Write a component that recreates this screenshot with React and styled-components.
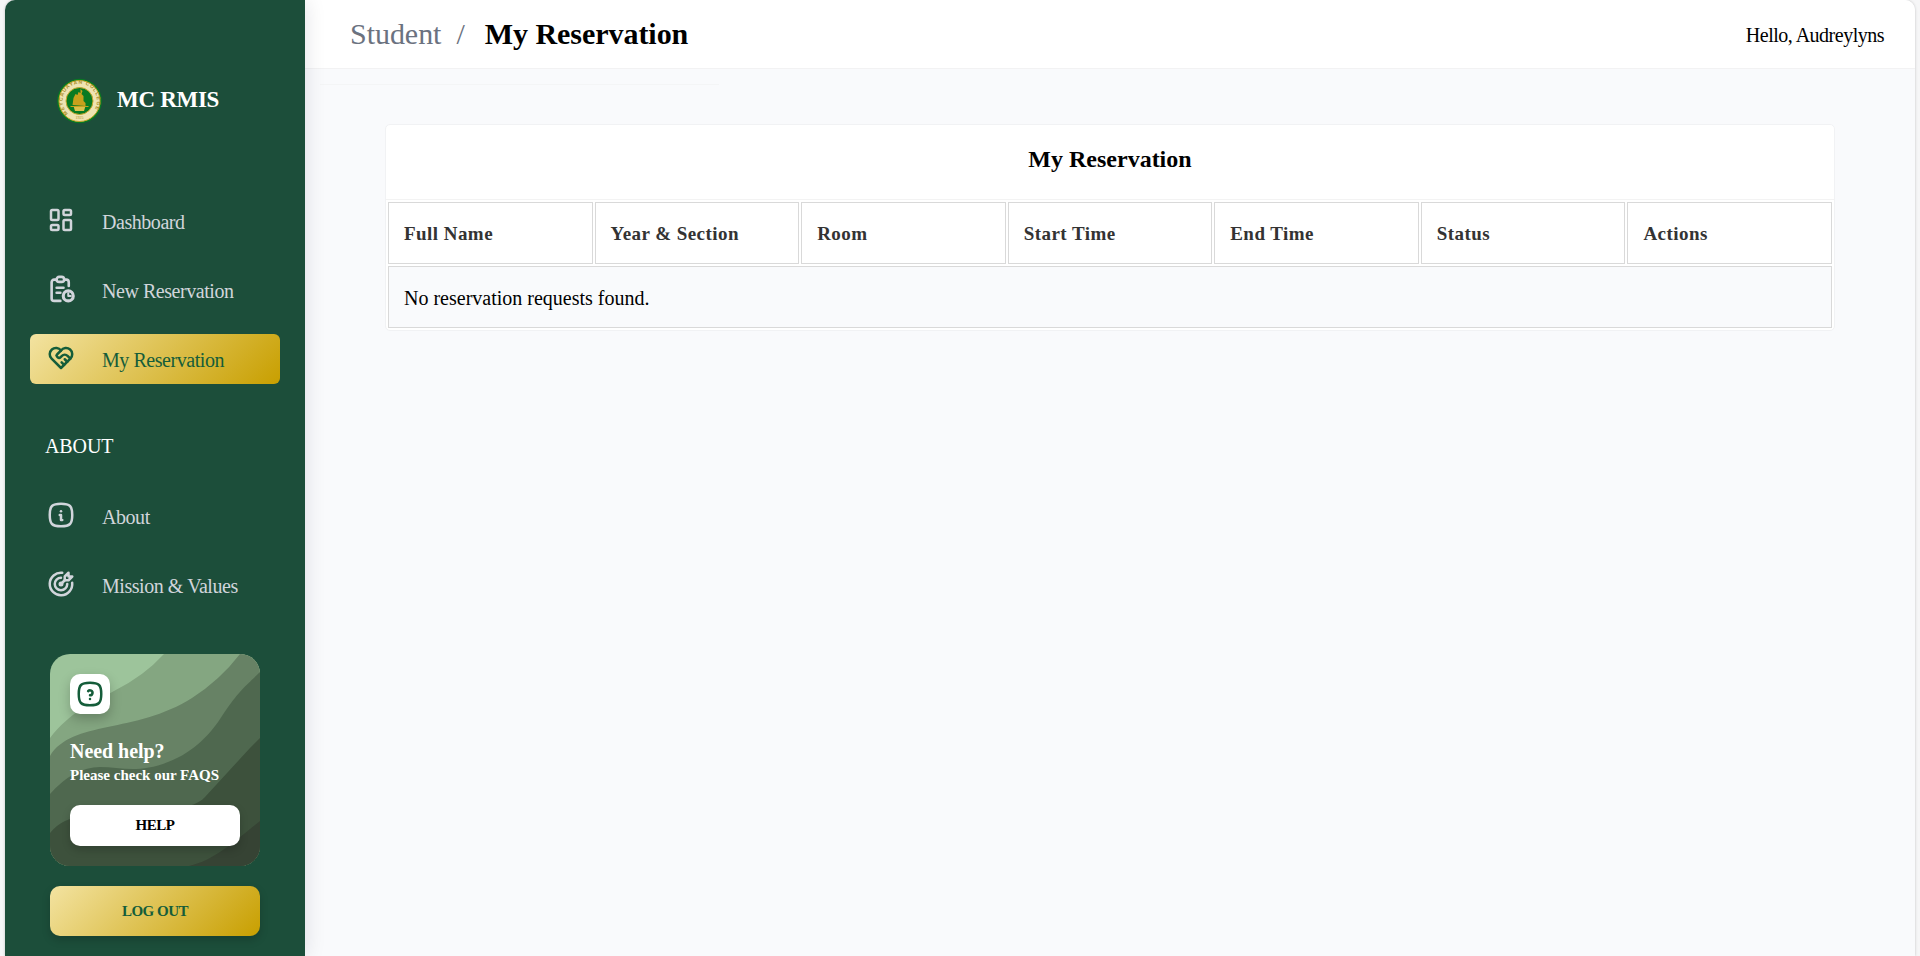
import React from 'react';
import styled, { createGlobalStyle, css } from 'styled-components';
import {
  TbLayoutDashboard,
  TbHeartHandshake,
  TbInfoSquareRounded,
  TbTargetArrow,
  TbHelpSquareRounded,
} from 'react-icons/tb';

const GlobalStyle = createGlobalStyle`
  * { box-sizing: border-box; }
  body {
    margin: 0;
    background: #f6f6f7;
    font-family: "Liberation Serif", serif;
    overflow: hidden;
  }
  h1, h2, h3, p { margin: 0; }
  button { font-family: inherit; border: 0; }
`;

const gold = 'linear-gradient(135deg, #f3e3a1 0%, #c89f00 100%)';

const Shell = styled.div`
  display: flex;
  height: 956px;
  margin: 0 5px;
  background: #f9fafc;
  border-radius: 10px 10px 0 0;
  box-shadow: 0 0 3px rgba(0, 0, 0, 0.22);
  overflow: hidden;
`;

const Sidebar = styled.aside`
  position: relative;
  width: 300px;
  flex: none;
  background: #1c4e3a;
  box-shadow: 0 0 20px rgba(20, 20, 40, 0.12);
`;

const Brand = styled.div`
  display: flex;
  align-items: center;
  gap: 15px;
  height: 50px;
  margin: 76px 0 0 51px;
`;

const BrandName = styled.h1`
  font-size: 23px;
  line-height: 26px;
  letter-spacing: -0.3px;
  color: #fff;
  padding-bottom: 2px;
`;

const Nav = styled.nav`
  display: flex;
  flex-direction: column;
  gap: 19px;
  padding: 0 25px;
  margin-top: ${(p) => p.$top}px;
`;

const NavItem = styled.a`
  display: flex;
  align-items: center;
  gap: 26.5px;
  height: 50px;
  padding-left: 15.5px;
  border-radius: 6px;
  font-size: 20px;
  letter-spacing: -0.45px;
  color: #d1d5db;
  svg { flex: none; margin-bottom: 3px; }
  span { padding-top: 2px; }
  ${(p) =>
    p.$active &&
    css`
      color: #155d3a;
      background: ${gold};
    `}
`;

const SectionTitle = styled.h2`
  margin: 51px 0 0 40px;
  font-size: 20px;
  font-weight: 400;
  line-height: 22px;
  letter-spacing: -0.1px;
  color: #fff;
`;

const HelpCard = styled.div`
  position: relative;
  width: 210px;
  height: 212px;
  margin: 44px 0 0 45px;
  padding: 20px;
  border-radius: 20px;
  overflow: hidden;
  color: #fff;
`;

const Waves = styled.svg`
  position: absolute;
  inset: 0;
`;

const HelpContent = styled.div`
  position: relative;
  display: flex;
  flex-direction: column;
`;

const HelpBadge = styled.div`
  display: grid;
  place-items: center;
  width: 40px;
  height: 40px;
  border-radius: 10px;
  background: #fff;
  color: #155d3a;
  box-shadow: 0 5px 12px rgba(0, 0, 0, 0.22);
`;

const HelpTitle = styled.h3`
  margin-top: 25px;
  font-size: 20px;
  line-height: 24px;
  letter-spacing: -0.05px;
`;

const HelpText = styled.p`
  margin-top: 1px;
  font-size: 15px;
  line-height: 22px;
  font-weight: 700;
`;

const Button = styled.button`
  display: block;
  font-size: 15px;
  font-weight: 700;
  padding: 0;
  border-radius: 10px;
  box-shadow: 0 4px 8px rgba(0, 0, 0, 0.18);
`;

const HelpButton = styled(Button)`
  width: 170px;
  height: 41px;
  margin-top: 19px;
  letter-spacing: -0.4px;
  background: #fff;
  color: #000;
`;

const LogoutButton = styled(Button)`
  width: 210px;
  height: 50px;
  margin: 20px 0 0 45px;
  letter-spacing: -0.5px;
  background: ${gold};
  color: #155d3a;
`;

const Main = styled.main`
  flex: 1;
  min-width: 0;
`;

const Header = styled.header`
  display: flex;
  justify-content: space-between;
  align-items: center;
  height: 69px;
  padding: 0 31px 0 45px;
  background: #fff;
  border-bottom: 1px solid #f2f2f3;
`;

const Breadcrumb = styled.div`
  display: flex;
  align-items: center;
  font-size: 30px;
  line-height: 34px;
  letter-spacing: -0.04px;
  color: #6b7280;
  span { margin-left: 15px; }
  strong { margin-left: 20px; color: #000; }
`;

const Greeting = styled.div`
  font-size: 20px;
  letter-spacing: -0.5px;
  padding-top: 2px;
  color: #000;
`;

const Divider = styled.div`
  width: 399px;
  height: 1px;
  margin: 15px 0 0 15px;
  background: #f4f5f6;
`;

const Card = styled.section`
  width: 1450px;
  margin: 39px 0 0 80px;
  border: 1px solid #f1f2f4;
  border-radius: 5px;
  background: #fff;
`;

const CardTitle = styled.h2`
  height: 75px;
  padding-top: 20px;
  border-bottom: 1px solid #f3f3f3;
  text-align: center;
  font-size: 24px;
  line-height: 29px;
`;

const Table = styled.table`
  width: 100%;
  table-layout: fixed;
  border-collapse: separate;
  border-spacing: 2px;
  text-align: left;
`;

const Th = styled.th`
  height: 62px;
  padding: 1px 15px 0;
  border: 1px solid #d9d9d9;
  font-size: 19px;
  letter-spacing: 0.45px;
  color: #333;
`;

const Td = styled.td`
  height: 62px;
  padding: 2px 15px 0;
  border: 1px solid #d9d9d9;
  background: #f9fafc;
  font-size: 20px;
  color: #000;
`;

function Seal() {
  return (
    <svg width="46" height="46" viewBox="-0.5 1 46 46">
      <defs>
        <path id="ring-text" d="M11.500 36.500 A17.200 17.200 0 1 1 35.500 36" />
      </defs>
      <circle cx="23" cy="24" r="22.300" fill="#087a22" />
      <circle cx="23" cy="24" r="20.500" fill="#efe3b2" stroke="#c9a92b" />
      <circle cx="23" cy="24" r="13.500" fill="#087a22" stroke="#c9a92b" />
      <text fontSize="5" fontWeight="700" fontFamily="Liberation Sans, sans-serif" fill="#a98c1e">
        <textPath href="#ring-text" textLength="76">MEYCAUAYAN COLLEGE</textPath>
      </text>
      <text x="23" y="42.300" fontSize="4" textAnchor="middle" fill="#a98c1e">1925</text>
      <path d="M16 28l1-7 2-4 2 1 1-3 2 1V12l2 2-1 3 2 2v5l2 2v3z" fill="#c6a11c" />
      <path d="M17 29h12l-1.500 5H18.500z" fill="#d9c14c" />
      <path d="M14 29.500h18" stroke="#c6a11c" />
    </svg>
  );
}

function ClipboardClock() {
  return (
    <svg width="30" height="30" viewBox="0 0 24 24" fill="none" stroke="currentColor" strokeWidth="2.100" strokeLinecap="round" strokeLinejoin="round">
      <path d="M8 4.500H6.500a2 2 0 0 0-2 2v13a2 2 0 0 0 2 2h5M15.500 4.500h.7a2 2 0 0 1 2 2V9.500" />
      <rect x="8.500" y="2.300" width="6" height="4" rx="2" />
      <path d="M8.500 11h5.500M8.500 15h3" />
      <circle cx="17.800" cy="17.500" r="4" strokeWidth="2.500" />
      <path d="M17.800 15.300v2.300h2" strokeWidth="1.600" />
    </svg>
  );
}

function HelpWaves() {
  return (
    <Waves width="210" height="212" viewBox="0 0 210 212">
      <rect width="210" height="212" fill="#9dc49b" />
      <path d="M0 84C20 58 42 49 64 37Q94 22 114 0H210V212H0Z" fill="#84a681" />
      <path d="M0 102C22 66 85 80 142 44Q170 26 190 0H210V212H0Z" fill="#678265" />
      <path d="M0 140Q24 113 50 113C70 113 88 120 118 108C145 98 162 78 172 62C190 35 196 32 210 18V212H0Z" fill="#4f684f" />
      <path d="M0 179Q13 163 34 163C94 160 142 158 155 143L200 94Q206 88 210 84V212H0Z" fill="#3d513c" />
      <path d="M139 212C165 206 186 186 210 167V212Z" fill="#364334" />
    </Waves>
  );
}

const menu = [
  { label: 'Dashboard', icon: <TbLayoutDashboard size={30} /> },
  { label: 'New Reservation', icon: <ClipboardClock /> },
  { label: 'My Reservation', icon: <TbHeartHandshake size={30} />, active: true },
];

const aboutMenu = [
  { label: 'About', icon: <TbInfoSquareRounded size={30} /> },
  { label: 'Mission & Values', icon: <TbTargetArrow size={30} /> },
];

const columns = ['Full Name', 'Year & Section', 'Room', 'Start Time', 'End Time', 'Status', 'Actions'];

function Menu({ items, top }) {
  return (
    <Nav $top={top}>
      {items.map((item) => (
        <NavItem key={item.label} $active={item.active}>
          {item.icon}
          <span>{item.label}</span>
        </NavItem>
      ))}
    </Nav>
  );
}

export default function App() {
  return (
    <>
      <GlobalStyle />
      <Shell>
        <Sidebar>
          <Brand>
            <Seal />
            <BrandName>MC RMIS</BrandName>
          </Brand>
          <Menu items={menu} top={70} />
          <SectionTitle>ABOUT</SectionTitle>
          <Menu items={aboutMenu} top={34} />
          <HelpCard>
            <HelpWaves />
            <HelpContent>
              <HelpBadge><TbHelpSquareRounded size={30} /></HelpBadge>
              <HelpTitle>Need help?</HelpTitle>
              <HelpText>Please check our FAQS</HelpText>
              <HelpButton>HELP</HelpButton>
            </HelpContent>
          </HelpCard>
          <LogoutButton>LOG OUT</LogoutButton>
        </Sidebar>
        <Main>
          <Header>
            <Breadcrumb>
              Student<span>/</span><strong>My Reservation</strong>
            </Breadcrumb>
            <Greeting>Hello, Audreylyns</Greeting>
          </Header>
          <Divider />
          <Card>
            <CardTitle>My Reservation</CardTitle>
            <Table>
              <thead>
                <tr>{columns.map((c) => <Th key={c}>{c}</Th>)}</tr>
              </thead>
              <tbody>
                <tr><Td colSpan={7}>No reservation requests found.</Td></tr>
              </tbody>
            </Table>
          </Card>
        </Main>
      </Shell>
    </>
  );
}
